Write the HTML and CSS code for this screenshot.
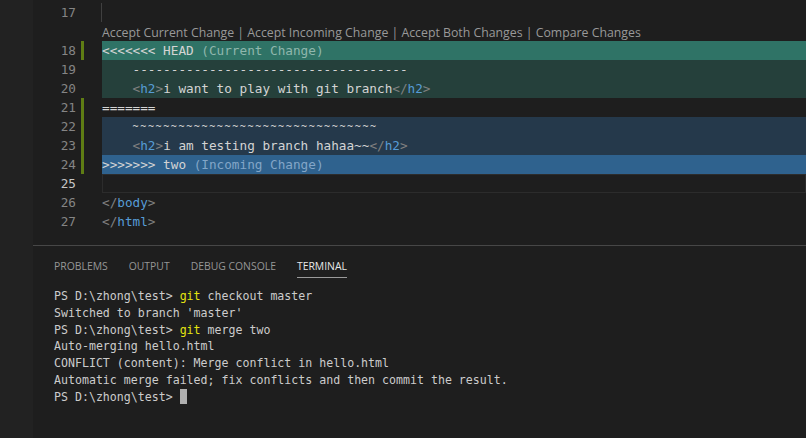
FILE: index.html
```html
<!DOCTYPE html>
<html>
<head>
<meta charset="utf-8">
<link rel="stylesheet" href="styles.css">
</head>
<body>
<div class="app">
  <div class="side"></div>
  <div class="main">
    <div class="editor">
      <div class="line"><span class="ln">17</span><span class="mark"></span><span class="code guide"></span></div>
      <div class="line lens"><span class="ln"></span><span class="mark"></span><span class="code">Accept Current Change | Accept Incoming Change | Accept Both Changes | Compare Changes</span></div>
      <div class="line"><span class="ln">18</span><span class="mark on"></span><span class="code cur-head">&lt;&lt;&lt;&lt;&lt;&lt;&lt; HEAD <span class="dec-c">(Current Change)</span></span></div>
      <div class="line"><span class="ln">19</span><span class="mark"></span><span class="code cur">    ------------------------------------</span></div>
      <div class="line"><span class="ln">20</span><span class="mark"></span><span class="code cur">    <span class="p">&lt;</span><span class="t">h2</span><span class="p">&gt;</span>i want to play with git branch<span class="p">&lt;/</span><span class="t">h2</span><span class="p">&gt;</span></span></div>
      <div class="line"><span class="ln">21</span><span class="mark on"></span><span class="code">=======</span></div>
      <div class="line"><span class="ln">22</span><span class="mark on"></span><span class="code inc">    <span class="tilde">~~~~~~~~~~~~~~~~~~~~~~~~~~~~~~~~</span></span></div>
      <div class="line"><span class="ln">23</span><span class="mark on"></span><span class="code inc">    <span class="p">&lt;</span><span class="t">h2</span><span class="p">&gt;</span>i am testing branch hahaa~~<span class="p">&lt;/</span><span class="t">h2</span><span class="p">&gt;</span></span></div>
      <div class="line"><span class="ln">24</span><span class="mark on"></span><span class="code inc-head">&gt;&gt;&gt;&gt;&gt;&gt;&gt; two <span class="dec-i">(Incoming Change)</span></span></div>
      <div class="line"><span class="ln active">25</span><span class="mark"></span><span class="code current"></span></div>
      <div class="line"><span class="ln">26</span><span class="mark"></span><span class="code"><span class="p">&lt;/</span><span class="t">body</span><span class="p">&gt;</span></span></div>
      <div class="line"><span class="ln">27</span><span class="mark"></span><span class="code"><span class="p">&lt;/</span><span class="t">html</span><span class="p">&gt;</span></span></div>
    </div>
    <div class="panel">
      <div class="tabs">
        <span class="tab">PROBLEMS</span>
        <span class="tab">OUTPUT</span>
        <span class="tab">DEBUG CONSOLE</span>
        <span class="tab active">TERMINAL</span>
      </div>
      <div class="term">
        <div class="tl">PS D:\zhong\test&gt; <span class="cmd">git</span> checkout master</div>
        <div class="tl">Switched to branch 'master'</div>
        <div class="tl">PS D:\zhong\test&gt; <span class="cmd">git</span> merge two</div>
        <div class="tl">Auto-merging hello.html</div>
        <div class="tl">CONFLICT (content): Merge conflict in hello.html</div>
        <div class="tl">Automatic merge failed; fix conflicts and then commit the result.</div>
        <div class="tl">PS D:\zhong\test&gt; <span class="cursor"></span></div>
      </div>
    </div>
  </div>
</div>
</body>
</html>
```
FILE: styles.css
```css
* { box-sizing: border-box; }
html, body { margin: 0; padding: 0; }
body {
  background: #1e1e1e;
  width: 806px;
  height: 438px;
  overflow: hidden;
}
.app {
  display: flex;
  height: 438px;
}
.side {
  width: 33px;
  flex: none;
  background: #222222;
}
.main {
  flex: 1;
  display: flex;
  flex-direction: column;
  min-width: 0;
}
.editor {
  flex: none;
  height: 245px;
  padding-top: 3px;
  font-family: "DejaVu Sans Mono", monospace;
  font-size: 12.7px;
  color: #d4d4d4;
}
.line {
  display: flex;
  height: 19px;
  line-height: 19px;
  white-space: pre;
}
.ln {
  width: 43px;
  flex: none;
  text-align: right;
  color: #858585;
}
.ln.active { color: #c6c6c6; }
.mark {
  width: 3px;
  margin-left: 5px;
  margin-right: 18px;
  flex: none;
}
.mark.on { background: #5f7d14; }
.code {
  flex: 1;
  min-width: 0;
}
.guide { border-left: 1px solid #404040; margin-left: -1px; }
.lens .code {
  font-family: "Open Sans", sans-serif;
  font-size: 12.3px;
  color: #999999;
  line-height: 22px;
}
.cur-head { background: #2f7366; }
.cur { background: #25403b; }
.inc-head { background: #2f628e; }
.inc { background: #25394b; }
.current { border: 1px solid #2c2c2c; }
.dec-c { color: #8fb7ad; }
.dec-i { color: #83a6c8; }
.p { color: #808080; }
.t { color: #569cd6; }
.tilde { font-size: 10px; letter-spacing: 1.64px; vertical-align: 2px; }
.panel {
  flex: 1;
  border-top: 1px solid #474747;
  padding-left: 21px;
}
.tabs {
  display: flex;
  height: 42px;
  padding-top: 12px;
  font-family: "Open Sans", sans-serif;
  font-size: 10.4px;
  color: #969696;
}
.tab {
  margin-right: 21px;
  height: 20px;
  line-height: 17px;
}
.tab.active {
  color: #e7e7e7;
  border-bottom: 1px solid #9a9a9a;
}
.term {
  font-family: "DejaVu Sans Mono", monospace;
  font-size: 11.6px;
  line-height: 16.8px;
  color: #cccccc;
}
.tl { white-space: pre; height: 16.8px; }
.cmd { color: #e5e510; }
.cursor {
  display: inline-block;
  width: 7px;
  height: 15px;
  background: #b0b0b0;
  vertical-align: -3px;
}
```
